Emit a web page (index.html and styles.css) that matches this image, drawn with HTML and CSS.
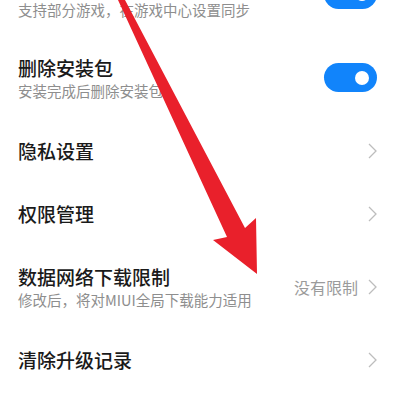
FILE: index.html
```html
<!DOCTYPE html>
<html lang="zh-CN">
<head>
<meta charset="utf-8">
<title>设置</title>
<link rel="stylesheet" href="styles.css">
</head>
<body>
<div class="page">
  <ul class="list">
    <li class="row row-double row-first">
      <div class="text">
        <div class="title title-hidden"></div>
        <div class="sub">支持部分游戏，在游戏中心设置同步</div>
      </div>
      <span class="toggle on toggle-first"><span class="knob"></span></span>
    </li>
    <li class="row row-double">
      <div class="text">
        <div class="title">删除安装包</div>
        <div class="sub">安装完成后删除安装包</div>
      </div>
      <span class="toggle on"><span class="knob"></span></span>
    </li>
    <li class="row">
      <div class="text"><div class="title">隐私设置</div></div>
      <span class="chev"><svg width="9" height="16" viewBox="0 0 9 16"><path d="M1 1 L8 8 L1 15" fill="none" stroke="#bdbdbd" stroke-width="1.3"/></svg></span>
    </li>
    <li class="row">
      <div class="text"><div class="title">权限管理</div></div>
      <span class="chev"><svg width="9" height="16" viewBox="0 0 9 16"><path d="M1 1 L8 8 L1 15" fill="none" stroke="#bdbdbd" stroke-width="1.3"/></svg></span>
    </li>
    <li class="row row-double">
      <div class="text">
        <div class="title">数据网络下载限制</div>
        <div class="sub">修改后，将对MIUI全局下载能力适用</div>
      </div>
      <span class="value">没有限制</span>
      <span class="chev"><svg width="9" height="16" viewBox="0 0 9 16"><path d="M1 1 L8 8 L1 15" fill="none" stroke="#bdbdbd" stroke-width="1.3"/></svg></span>
    </li>
    <li class="row">
      <div class="text"><div class="title">清除升级记录</div></div>
      <span class="chev"><svg width="9" height="16" viewBox="0 0 9 16"><path d="M1 1 L8 8 L1 15" fill="none" stroke="#bdbdbd" stroke-width="1.3"/></svg></span>
    </li>
  </ul>
  <svg class="arrow" width="399" height="405" viewBox="0 0 399 405">
    <polygon points="118,0 125,0 245,228 256,218 257,274 213,240 227,237" fill="#e9202b"/>
  </svg>
</div>
</body>
</html>
```

FILE: styles.css
```css
html, body {
  margin: 0;
  padding: 0;
  background: #ffffff;
}
body {
  width: 399px;
  height: 405px;
  overflow: hidden;
  font-family: "Noto Sans CJK SC", "Noto Sans", sans-serif;
}
.page {
  position: relative;
  width: 399px;
  height: 405px;
  overflow: hidden;
}
.list {
  list-style: none;
  margin: -45px 0 0 0;
  padding: 0;
}
.row {
  display: flex;
  align-items: center;
  padding: 20px 22px 20px 18px;
  box-sizing: border-box;
  height: 63px;
}
.row-double {
  height: 83px;
  padding-top: 19.5px;
  padding-bottom: 19.5px;
}
.row-first {
  height: 81px;
  padding-bottom: 17.5px;
}
.toggle-first {
  margin-top: -5px;
}
.text {
  flex: 1;
  min-width: 0;
}
.title {
  font-size: 19px;
  line-height: 23px;
  font-weight: 500;
  color: #1a1a1a;
  white-space: nowrap;
}
.title-hidden {
  height: 23px;
}
.sub {
  margin-top: 3px;
  font-size: 14.5px;
  line-height: 18px;
  color: #8e8e8e;
  white-space: nowrap;
}
.value {
  font-size: 16px;
  color: #9b9b9b;
  margin-right: 10px;
}
.chev {
  display: flex;
  width: 9px;
  height: 16px;
}
.toggle {
  position: relative;
  display: block;
  width: 53px;
  height: 29px;
  border-radius: 15px;
  background: #1184fb;
  flex: none;
}
.knob {
  position: absolute;
  top: 7.5px;
  right: 8px;
  width: 14px;
  height: 14px;
  border-radius: 50%;
  background: #ffffff;
}
.arrow {
  position: absolute;
  top: 0;
  left: 0;
  pointer-events: none;
}
```
